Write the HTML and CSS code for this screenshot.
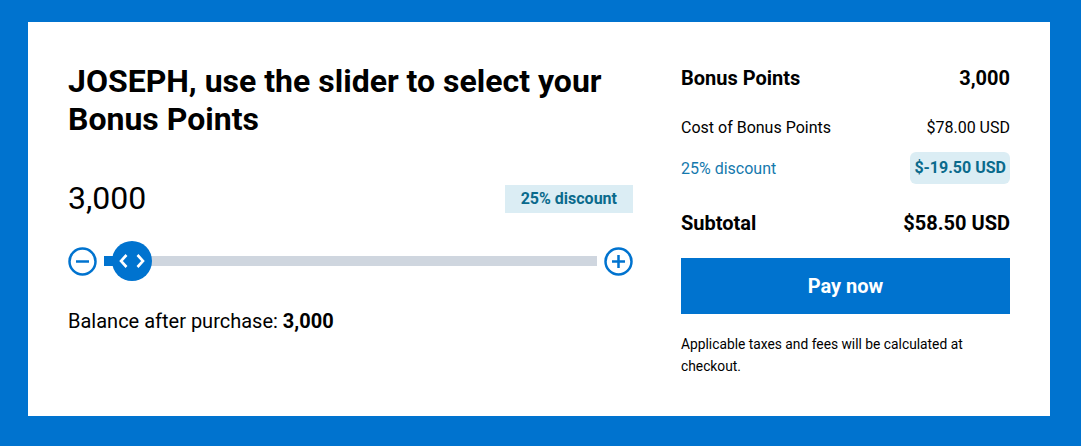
FILE: index.html
```html
<!DOCTYPE html>
<html>
<head>
<meta charset="utf-8">
<link rel="stylesheet" href="styles.css">
</head>
<body>
<div class="card">
  <section class="left">
    <h1 class="title">JOSEPH, use the slider to select your Bonus Points</h1>
    <div class="amount-row">
      <span class="amount">3,000</span>
      <span class="badge">25% discount</span>
    </div>
    <div class="slider">
      <svg class="step" width="29" height="29" viewBox="0 0 29 29"><circle cx="14.5" cy="14.5" r="13" fill="none" stroke="#0073cf" stroke-width="2.5"/><path d="M8 14.5h13" stroke="#0073cf" stroke-width="2.5"/></svg>
      <div class="track">
        <div class="fill"></div>
        <div class="thumb">
          <svg width="40" height="40" viewBox="0 0 40 40"><path d="M14.5 14l-5.5 6 5.5 6M25.5 14l5.5 6-5.5 6" fill="none" stroke="#fff" stroke-width="2.6"/></svg>
        </div>
      </div>
      <svg class="step" width="29" height="29" viewBox="0 0 29 29"><circle cx="14.5" cy="14.5" r="13" fill="none" stroke="#0073cf" stroke-width="2.5"/><path d="M8 14.5h13M14.5 8v13" stroke="#0073cf" stroke-width="2.5"/></svg>
    </div>
    <p class="balance">Balance after purchase: <b>3,000</b></p>
  </section>
  <section class="right">
    <div class="row head"><span>Bonus Points</span><span>3,000</span></div>
    <div class="row cost"><span>Cost of Bonus Points</span><span>$78.00 USD</span></div>
    <div class="row disc"><span>25% discount</span><span class="disc-badge">$-19.50 USD</span></div>
    <div class="row sub"><span>Subtotal</span><span>$58.50 USD</span></div>
    <button class="pay">Pay now</button>
    <p class="note">Applicable taxes and fees will be calculated at checkout.</p>
  </section>
</div>
</body>
</html>
```
FILE: styles.css
```css
* { box-sizing: border-box; }
html, body { margin: 0; padding: 0; }
body {
  background: #0073cf;
  font-family: Roboto, "Liberation Sans", sans-serif;
  color: #000;
  padding: 22px 31px 30px 28px;
}
.card {
  background: #fff;
  height: 394px;
  padding: 40px 40px 0 40px;
  display: grid;
  grid-template-columns: 565px 329px;
  column-gap: 48px;
}
.title {
  margin: 0;
  font-size: 32px;
  line-height: 38px;
  font-weight: 700;
}
.amount-row {
  margin-top: 42px;
  display: flex;
  justify-content: space-between;
  align-items: center;
  height: 36px;
}
.amount { font-size: 32px; line-height: 36px; }
.badge {
  background: #dbedf4;
  color: #0a6a8c;
  font-weight: 700;
  font-size: 16px;
  height: 28px;
  line-height: 28px;
  padding: 0 16px;
  margin-top: 2px;
}
.slider {
  margin-top: 25px;
  display: flex;
  align-items: center;
  height: 40px;
}
.step { flex: none; display: block; }
.track {
  position: relative;
  flex: 1;
  height: 10px;
  background: #cfd6df;
  margin: 0 7px;
}
.fill {
  position: absolute;
  left: 0; top: 0; bottom: 0;
  width: 20px;
  background: #0073cf;
}
.thumb {
  position: absolute;
  left: 8px;
  top: -15px;
  width: 40px;
  height: 40px;
  border-radius: 50%;
  background: #0073cf;
}
.thumb svg { display: block; }
.balance {
  margin: 28px 0 0 0;
  font-size: 20px;
  line-height: 24px;
}
.right { display: flex; flex-direction: column; }
.row { display: flex; justify-content: space-between; align-items: center; }
.head { margin-top: 4px; font-weight: 700; font-size: 20px; line-height: 24px; }
.cost { margin-top: 28px; font-size: 16px; line-height: 20px; }
.disc { margin-top: 14px; font-size: 16px; color: #1579ad; height: 32px; }
.disc-badge {
  background: #dbedf4;
  color: #0a6a8c;
  font-weight: 700;
  font-size: 16px;
  line-height: 32px;
  padding: 0 4px;
  border-radius: 6px;
}
.sub { margin-top: 26px; font-weight: 700; font-size: 20px; line-height: 26px; }
.pay {
  margin-top: 22px;
  height: 56px;
  border: 0;
  background: #0073cf;
  color: #fff;
  font-family: inherit;
  font-weight: 700;
  font-size: 20px;
}
.note {
  margin: 19px 0 0 0;
  font-size: 13.8px;
  line-height: 22px;
}
```
